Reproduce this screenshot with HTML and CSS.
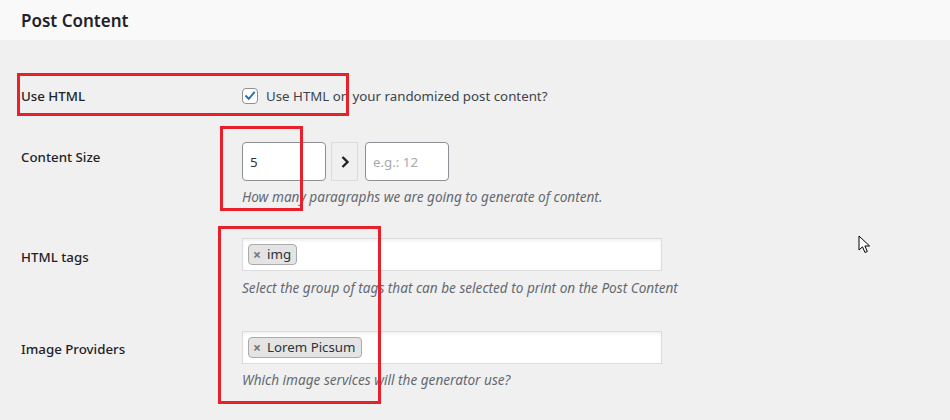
FILE: index.html
```html
<!DOCTYPE html>
<html lang="en">
<head>
<meta charset="utf-8">
<title>Post Content</title>
<link rel="stylesheet" href="styles.css">
</head>
<body>
<header class="panel-head">
  <h2 class="panel-title">Post Content</h2>
</header>
<main class="panel-body">
  <div class="field-row row-html">
    <div class="field-label">Use HTML</div>
    <div class="field-control">
      <label class="check">
        <span class="check-box">
          <svg viewBox="0 0 16 16" width="16" height="16"><path d="M3.6 8.2 L6.6 11.2 L12.6 4.2" fill="none" stroke="#2271b1" stroke-width="2.2" stroke-linecap="square"/></svg>
        </span>
        <span>Use HTML on your randomized post content?</span>
      </label>
    </div>
  </div>

  <div class="field-row row-size">
    <div class="field-label">Content Size</div>
    <div class="field-control">
      <div class="range">
        <div class="text-input">5</div>
        <div class="range-sep">
          <svg viewBox="0 0 10 14" width="10" height="14"><path d="M2.5 2 L7.5 7 L2.5 12" fill="none" stroke="#1d2327" stroke-width="2.4"/></svg>
        </div>
        <div class="text-input placeholder">e.g.: 12</div>
      </div>
      <p class="desc">How many paragraphs we are going to generate of content.</p>
    </div>
  </div>

  <div class="field-row row-tags">
    <div class="field-label">HTML tags</div>
    <div class="field-control">
      <div class="multi">
        <span class="chip"><span class="chip-x">×</span>img</span>
      </div>
      <p class="desc">Select the group of tags that can be selected to print on the Post Content</p>
    </div>
  </div>

  <div class="field-row row-providers">
    <div class="field-label">Image Providers</div>
    <div class="field-control">
      <div class="multi">
        <span class="chip"><span class="chip-x">×</span>Lorem Picsum</span>
      </div>
      <p class="desc">Which image services will the generator use?</p>
    </div>
  </div>

  <!-- highlight frames drawn over the form -->
  <div class="mark mark-a"></div>
  <div class="mark mark-b"></div>
  <div class="mark mark-c"></div>

  <svg class="pointer" viewBox="0 0 13 20" width="13" height="20">
    <path d="M1 1 L1 15 L4.5 11.8 L7 17.5 L9.3 16.5 L6.9 11 L11.6 11 Z" fill="#fff" stroke="#000" stroke-width="1" stroke-linejoin="miter"/>
  </svg>
</main>
</body>
</html>
```
FILE: styles.css
```css
* { box-sizing: border-box; }

html, body {
  margin: 0;
  height: 100%;
}

body {
  background: #f0f0f0;
  font-family: "Noto Sans", "Open Sans", sans-serif;
  font-size: 13.3px;
  color: #1d2327;
  overflow: hidden;
}

.panel-head {
  height: 40px;
  background: #f9f9f9;
  padding: 0 21px;
  display: flex;
  align-items: center;
}

.panel-title {
  margin: 0;
  font-size: 17px;
  font-weight: 600;
  line-height: 1;
  color: #1d2327;
}

.panel-body {
  position: relative;
  padding: 32px 21px 0;
  height: 380px;
}

.field-row {
  display: grid;
  grid-template-columns: 221px 1fr;
  padding-top: 15px;
  padding-bottom: 15px;
}

.field-label {
  line-height: 20px;
  font-weight: 500;
}

.row-html { padding-top: 14px; padding-bottom: 21px; }

.row-size .field-label { padding-top: 5px; }

.row-tags { padding-top: 16px; }
.row-tags .field-label { padding-top: 9px; }

.row-providers { padding-top: 18px; }
.row-providers .field-label { padding-top: 8px; }

.check {
  display: flex;
  align-items: center;
  gap: 8px;
  line-height: 20px;
  color: #3c434a;
}

.check-box {
  width: 16px;
  height: 16px;
  border: 1px solid #8c8f94;
  border-radius: 4px;
  background: #fff;
  display: flex;
  align-items: center;
  justify-content: center;
}

.check-box svg { display: block; }

.range {
  display: flex;
  align-items: stretch;
  gap: 5px;
  height: 39px;
}

.text-input {
  width: 84px;
  border: 1px solid #8c8f94;
  border-radius: 4px;
  background: #fff;
  padding: 0 7px;
  display: flex;
  align-items: center;
  color: #2c3338;
}

.text-input.placeholder {
  color: #a7aaad;
  margin-left: 2px;
}

.range-sep {
  width: 27px;
  border: 1px solid #dcdcde;
  background: #f0f0f0;
  display: flex;
  align-items: center;
  justify-content: center;
}

.desc {
  margin: 6px 0 0;
  font-size: 13.6px;
  line-height: 20px;
  font-style: italic;
  color: #646970;
}

.row-tags .desc { margin-top: 7px; }
.row-providers .desc { margin-top: 6px; }

.multi {
  width: 420px;
  height: 33px;
  background: #fff;
  border: 1px solid #dcdcde;
  box-shadow: inset 0 2px 3px rgba(0, 0, 0, 0.06);
  padding: 5px;
  display: flex;
  align-items: flex-start;
}

.chip {
  display: inline-flex;
  align-items: center;
  height: 21px;
  padding: 0 5px 0 4px;
  background: #e4e4e4;
  border: 1px solid #aaa;
  border-radius: 4px;
  font-size: 13.3px;
  color: #2c3338;
  line-height: 1;
}

.chip-x {
  color: #777;
  font-weight: 700;
  font-size: 14px;
  margin-right: 6px;
}

.mark {
  position: absolute;
  border: 3px solid #e8202a;
  pointer-events: none;
}

.mark-a { left: 17px; top: 33px; width: 332px; height: 43px; }
.mark-b { left: 220px; top: 86px; width: 83px; height: 85px; }
.mark-c { left: 218px; top: 186px; width: 163px; height: 178px; }

.pointer {
  position: absolute;
  left: 858px;
  top: 195px;
}
```
